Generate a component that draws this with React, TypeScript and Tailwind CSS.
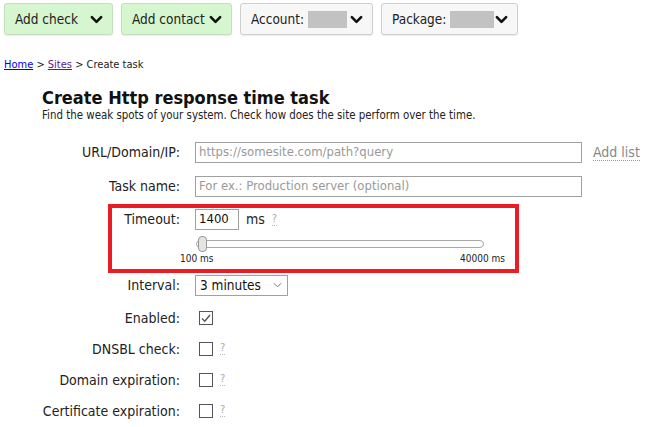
import React from 'react';

const font = { fontFamily: '"DejaVu Sans Condensed", "DejaVu Sans", sans-serif' };

function Chevron({ className = '' }: { className?: string }) {
  return (
    <svg viewBox="0 0 14 9" className={className} width="13" height="9">
      <path d="M2 2 L7 7 L12 2" fill="none" stroke="#111" strokeWidth="2.8" strokeLinecap="round" strokeLinejoin="round" />
    </svg>
  );
}

function TopButton({ children, green }: { children: React.ReactNode; green?: boolean }) {
  return (
    <div
      className={
        'flex h-[32px] items-center rounded-[3px] border pl-[10px] pr-[9px] text-[13.5px] text-[#222] shadow-[0_1px_1px_rgba(0,0,0,0.08)] ' +
        (green ? 'border-[#c4dfbc] bg-[#d6f6cf]' : 'border-[#cfcfcf] bg-[#f7f7f7]')
      }
    >
      {children}
    </div>
  );
}

function Help() {
  return <span className="ml-[7px] border-b border-dotted border-[#bbb] text-[11px] leading-[12px] text-[#aaa]">?</span>;
}

function Row({ label, children, className = '' }: { label: string; children?: React.ReactNode; className?: string }) {
  return (
    <div className={'flex items-center ' + className}>
      <div className="w-[180px] text-right text-[14px] leading-[20px] text-[#222]">{label}</div>
      <div className="ml-[15px] flex items-center">{children}</div>
    </div>
  );
}

function Checkbox({ checked }: { checked?: boolean }) {
  return (
    <div className="ml-[4px] flex h-[14px] w-[14px] items-center justify-center border border-[#555] bg-white">
      {checked && (
        <svg viewBox="0 0 12 12" width="12" height="12">
          <path d="M2 6.5 L4.8 9.2 L10 3" fill="none" stroke="#555" strokeWidth="1.4" />
        </svg>
      )}
    </div>
  );
}

export default function App() {
  return (
    <div className="h-[427px] w-[650px] overflow-hidden bg-white" style={font}>
      {/* Top toolbar */}
      <div className="flex gap-[8px] pl-[4px] pt-[3px]">
        <div className="w-[109px]">
          <TopButton green>
            <span>Add check</span>
            <Chevron className="ml-auto" />
          </TopButton>
        </div>
        <div className="w-[111px]">
          <TopButton green>
            <span>Add contact</span>
            <Chevron className="ml-auto" />
          </TopButton>
        </div>
        <div className="w-[133px]">
          <TopButton>
            <span>Account:</span>
            <span className="ml-[4px] h-[17px] w-[39px] bg-[#c2c2c2]" />
            <Chevron className="ml-auto" />
          </TopButton>
        </div>
        <div className="w-[137px]">
          <TopButton>
            <span>Package:</span>
            <span className="ml-[4px] h-[17px] w-[44px] bg-[#c2c2c2]" />
            <Chevron className="ml-auto" />
          </TopButton>
        </div>
      </div>

      {/* Breadcrumb */}
      <div className="mt-[22px] pl-[4px] text-[11px] text-[#222]">
        <a href="#" className="text-[#0000ee] underline">Home</a> &gt;{' '}
        <a href="#" className="text-[#551a8b] underline">Sites</a> &gt; Create task
      </div>

      {/* Heading */}
      <div className="mt-[14px] pl-[42px]">
        <h1 className="text-[18px] font-bold leading-[20px] text-[#111]">Create Http response time task</h1>
        <p className="text-[11.4px] leading-[14px] text-[#222]">
          Find the weak spots of your system. Check how does the site perform over the time.
        </p>
      </div>

      {/* Form */}
      <div className="mt-[20px]">
        <Row label="URL/Domain/IP:">
          <div className="flex h-[21px] w-[387px] items-center border border-[#a0a0a0] px-[3px] text-[13px] text-[#999]">
            https://somesite.com/path?query
          </div>
          <span className="ml-[11px] border-b border-dotted border-[#999] text-[14px] leading-[16px] text-[#888]">Add list</span>
        </Row>
        <Row label="Task name:" className="mt-[13px]">
          <div className="flex h-[21px] w-[387px] items-center border border-[#a0a0a0] px-[3px] text-[13px] text-[#999]">
            For ex.: Production server (optional)
          </div>
        </Row>

        {/* Highlighted timeout block */}
        <div className="ml-[108px] mt-[7px] h-[69px] w-[411px] border-4 border-[#ec1c24]">
          <div className="flex items-center pt-[1px]">
            <div className="w-[68px] text-right text-[14px] text-[#222]">Timeout:</div>
            <div className="ml-[15px] flex h-[21px] w-[44px] items-center border border-[#a0a0a0] px-[3px] text-[13px] text-[#111]">
              1400
            </div>
            <span className="ml-[7px] text-[14px] text-[#222]">ms</span>
            <Help />
          </div>
          <div className="ml-[84px] mt-[6px] flex h-[16px] w-[288px] items-center">
            <div className="relative h-[8px] w-full rounded-[4px] border border-[#a8a8a8] bg-[#fbfbfb]">
              <div className="absolute left-[1px] top-[-5px] h-[16px] w-[9px] rounded-[4px] border border-[#999] bg-[#e4e4e4]" />
            </div>
          </div>
          <div className="ml-[68px] mt-[1px] flex w-[325px] justify-between text-[10px] leading-[12px] text-[#222]">
            <span>100 ms</span>
            <span>40000 ms</span>
          </div>
        </div>

        <Row label="Interval:" className="mt-[2px]">
          <div className="flex h-[21px] w-[93px] items-center border border-[#a0a0a0] pl-[4px] pr-[5px] text-[13.5px] text-[#111]">
            3 minutes
            <svg viewBox="0 0 10 6" width="9" height="6" className="ml-auto">
              <path d="M1 1 L5 5 L9 1" fill="none" stroke="#666" strokeWidth="1" />
            </svg>
          </div>
        </Row>
        <Row label="Enabled:" className="mt-[12px]">
          <Checkbox checked />
        </Row>
        <Row label="DNSBL check:" className="mt-[11px]">
          <Checkbox />
          <Help />
        </Row>
        <Row label="Domain expiration:" className="mt-[11px]">
          <Checkbox />
          <Help />
        </Row>
        <Row label="Certificate expiration:" className="mt-[11px]">
          <Checkbox />
          <Help />
        </Row>
      </div>
    </div>
  );
}
